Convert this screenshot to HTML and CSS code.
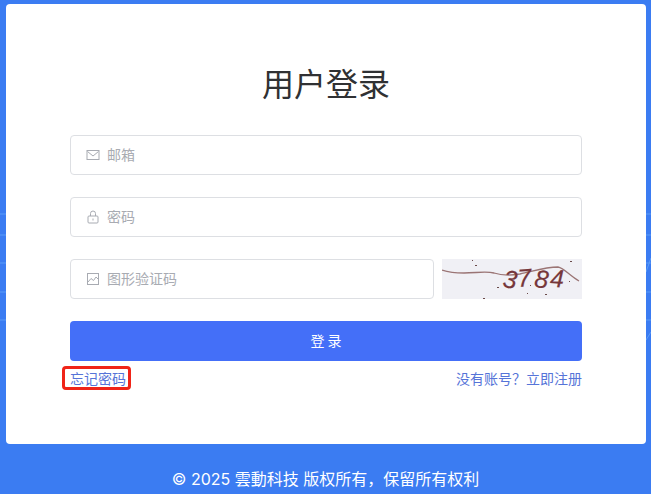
FILE: index.html
```html
<!DOCTYPE html>
<html lang="zh-CN">
<head>
<meta charset="utf-8">
<title>用户登录</title>
<link rel="stylesheet" href="styles.css">
</head>
<body>
<svg class="bg-lines" width="651" height="494" viewBox="0 0 651 494" aria-hidden="true">
  <g fill="none" stroke="#5a9cf8" stroke-width="1">
    <path d="M0 214H6M0 235H6M0 263H6M0 292H6M0 320H6"/>
    <path d="M646 214H651M646 235H651M646 263H651M646 292H651M646 320H651"/>
    <path d="M646 272L651 258M646 340L651 332"/>
  </g>
</svg>
<main class="card">
  <h1 class="title">用户登录</h1>
  <form class="form">
    <label class="field">
      <svg class="icon" viewBox="0 0 14 14"><rect x="1" y="2.500" width="12" height="9" fill="none" stroke="currentColor"/><path d="M1.500 3.500L7 8l5.500-4.500" fill="none" stroke="currentColor"/></svg>
      <input class="input" type="text" placeholder="邮箱">
    </label>
    <label class="field">
      <svg class="icon" viewBox="0 0 14 14"><rect x="2" y="6" width="10" height="7" rx="1" fill="none" stroke="currentColor"/><path d="M4.500 6V3.500a2.500 2.500 0 0 1 5 0V6" fill="none" stroke="currentColor"/><path d="M7 8.500v2" stroke="currentColor"/></svg>
      <input class="input" type="password" placeholder="密码">
    </label>
    <div class="captcha-row">
      <label class="field field-grow">
        <svg class="icon" viewBox="0 0 14 14"><rect x="1.500" y="1.500" width="11" height="11" fill="none" stroke="currentColor"/><path d="M2 10l3-3.500 2.500 2L10 5l2.500 2.500" fill="none" stroke="currentColor"/></svg>
        <input class="input" type="text" placeholder="图形验证码">
      </label>
      <svg class="captcha" width="140" height="40" viewBox="0 0 140 40" role="img" aria-label="验证码">
        <path class="captcha-line" d="M0 11C6 13 12 14 22 14C34 14 44 12 52 14C58 16 66 17 78 15C92 12 104 8 116 8C122 9 128 17 137 22"/>
        <text class="captcha-text" x="60" y="28" rotate="8 -4 6 2">3784</text>
        <g class="captcha-dots">
          <rect x="30" y="1" width="1" height="1"/><rect x="33" y="6" width="2" height="1"/><rect x="128" y="2" width="2" height="1"/><rect x="127" y="22" width="1" height="1"/>
          <rect x="55" y="28" width="2" height="1"/><rect x="88" y="26" width="1" height="1"/><rect x="103" y="35" width="2" height="1"/><rect x="85" y="34" width="1" height="1"/>
          <rect x="41" y="39" width="2" height="1"/>
        </g>
      </svg>
    </div>
    <button class="submit" type="button">登 录</button>
    <div class="links">
      <a class="link link-marked" href="#">忘记密码</a>
      <a class="link" href="#">没有账号？立即注册</a>
    </div>
  </form>
</main>
<footer class="footer">© 2025 雲動科技 版权所有，保留所有权利</footer>
</body>
</html>
```
FILE: styles.css
```css
*, *::after { box-sizing: border-box; }
html, body { height: 100%; }
body {
  margin: 0;
  height: 494px;
  overflow: hidden;
  position: relative;
  background: #3b7cf2;
  font-family: "Noto Sans CJK SC", "Noto Sans", sans-serif;
  display: flex;
  flex-direction: column;
  padding: 4px 5px 0 6px;
}
.bg-lines { position: absolute; left: 0; top: 0; }
.card {
  position: relative;
  height: 440px;
  background: #fff;
  border-radius: 4px;
  padding: 53px 64px 0;
}
.title {
  margin: 0 0 28px;
  height: 50px;
  line-height: 50px;
  text-align: center;
  font-size: 32px;
  font-weight: 400;
  color: #303133;
}
.form { display: flex; flex-direction: column; gap: 22px; }
.field {
  display: flex;
  align-items: center;
  height: 40px;
  padding: 0 15px;
  gap: 7px;
  border: 1px solid #dddfe3;
  border-radius: 4px;
  background: #fff;
  color: #a8abb2;
}
.field-grow { flex: 1; }
.icon { width: 14px; height: 14px; flex: none; }
.input {
  flex: 1;
  min-width: 0;
  border: 0;
  outline: 0;
  padding: 0 0 2px;
  font: inherit;
  font-size: 14px;
  color: #606266;
  background: transparent;
}
.input::placeholder { color: #a8abb2; opacity: 1; }
.captcha-row { display: flex; gap: 8px; }
.captcha { flex: none; background: #f0f0f5; }
.captcha-line { fill: none; stroke: #9a7474; stroke-width: 1.300; }
.captcha-text {
  font-family: "Liberation Sans", sans-serif;
  font-style: italic;
  font-size: 25px;
  letter-spacing: 2px;
  fill: #76373a;
  stroke: #76373a;
  stroke-width: 0.200;
}
.captcha-dots { fill: #6a4a4a; }
.submit {
  height: 40px;
  border: 0;
  border-radius: 4px;
  padding: 0 0 2px;
  background: #446ff8;
  color: #fff;
  font: inherit;
  font-size: 14px;
}
.links {
  display: flex;
  justify-content: space-between;
  margin-top: -16px;
  height: 24px;
  line-height: 22px;
  font-size: 14px;
}
.link { color: #5674d8; text-decoration: none; }
.link-marked { position: relative; }
.link-marked::after {
  content: "";
  position: absolute;
  left: -8px;
  top: -1px;
  width: 69px;
  height: 24px;
  border: 3px solid #f02418;
  border-radius: 4px;
}
.footer {
  margin: 22px -5px 0 -6px;
  text-align: center;
  font-family: "Inter", "Noto Sans CJK SC", sans-serif;
  font-size: 16px;
  line-height: 26px;
  color: #fff;
}
```
